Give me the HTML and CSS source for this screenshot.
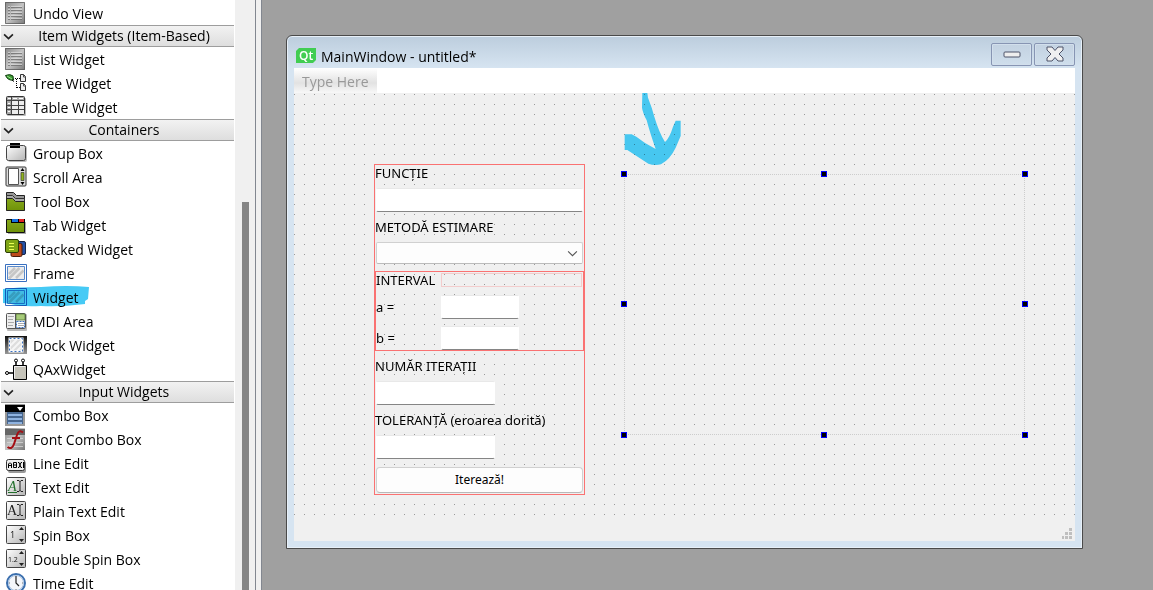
FILE: index.html
```html
<!DOCTYPE html>
<html lang="ro">
<head>
<meta charset="utf-8">
<title>Designer</title>
<link rel="stylesheet" href="styles.css">
</head>
<body>
<svg class="defs" aria-hidden="true">
  <defs>
    <linearGradient id="metal" x1="0" y1="0" x2="1" y2="1"><stop offset="0" stop-color="#fff"/><stop offset="1" stop-color="#b5b5b5"/></linearGradient>
    <linearGradient id="dark" x1="0" y1="0" x2="1" y2="1"><stop offset="0" stop-color="#8a8a8a"/><stop offset=".5" stop-color="#c4c4c4"/><stop offset="1" stop-color="#777"/></linearGradient>
    <linearGradient id="night" x1="0" y1="0" x2="0" y2="1"><stop offset="0" stop-color="#111"/><stop offset="1" stop-color="#999"/></linearGradient>
    <linearGradient id="green" x1="0" y1="0" x2="0" y2="1"><stop offset="0" stop-color="#86a81c"/><stop offset="1" stop-color="#6f9208"/></linearGradient>
    <symbol id="i-list" viewBox="0 0 22 22"><path fill="url(#dark)" d="M0 0h20v22H0z"/><path fill="none" stroke="#555" d="M.5.5h19v21H.5z" opacity=".7"/><path stroke="#ddd" d="M3 4.500h2m1 0h11M3 7.500h2m1 0h11M3 10.500h2m1 0h11M3 13.500h2m1 0h11M3 16.500h2m1 0h11" opacity=".7"/><path stroke="#666" d="M3 5.500h2m1 0h11M3 8.500h2m1 0h11M3 11.500h2m1 0h11M3 14.500h2m1 0h11M3 17.500h2m1 0h11" opacity=".7"/></symbol>
    <symbol id="i-frame" viewBox="0 0 22 22"><path fill="#fff" stroke="#3970c0" d="M.5 2.500h21v17H.5z"/><path fill="#ececec" stroke="#5a8acb" d="M2.500 4.500h17v13h-17z"/><path stroke="#c6c6c6" stroke-width="2.500" d="M4 12l6-6M4 16.500L14.500 6M11 16l7.500-7.500"/></symbol>
  </defs>
</svg>
<div class="app">
  <aside class="palette">
    <ul class="items">
      <li><svg class="ic"><use href="#i-list"/></svg>Undo View</li>
    </ul>
    <h2><svg class="chev" viewBox="0 0 10 6"><path d="M1 1l4 4 4-4"/></svg><span>Item Widgets (Item-Based)</span></h2>
    <ul class="items">
      <li><svg class="ic"><use href="#i-list"/></svg>List Widget</li>
      <li><svg class="ic" viewBox="0 0 22 22"><path fill="#3c9c35" stroke="#143f13" d="M.5 3.500Q5 1.500 8 4l.5 4Q3 9 .5 3.500z"/><path stroke="#9be08c" d="M2 4l5 3"/><path stroke="#000" d="M7 8l2 1.500"/><path fill="none" stroke="#000" stroke-dasharray="1 1" d="M10 6.500h5M11.500 7v9M12 15.500h3"/><path fill="#eee" stroke="#333" d="M15.500 2.500h3l2 2v5h-5zM15.500 11.500h3l2 2v5h-5z"/><path fill="none" stroke="#555" d="M18.500 2v3H21M18.500 11v3H21"/></svg>Tree Widget</li>
      <li><svg class="ic" viewBox="0 0 22 22"><rect x="2" y="2" width="19" height="18" rx="1" fill="#bbb"/><rect x="1.500" y=".5" width="18" height="18" rx="1" fill="#eee" stroke="#333"/><path fill="#aaa" d="M2 1h17v4H2zM2 5h4v13H2z"/><path stroke="#fff" d="M3 2.500h3m2 0h4m2 0h4M3 7.500h2M3 11.500h2M3 15.500h2"/><path stroke="#444" d="M2 4.500h17M6.500 1v17M13.500 4v14M2 9.500h17M2 13.500h17"/></svg>Table Widget</li>
    </ul>
    <h2><svg class="chev" viewBox="0 0 10 6"><path d="M1 1l4 4 4-4"/></svg><span>Containers</span></h2>
    <ul class="items">
      <li><svg class="ic" viewBox="0 0 22 22"><rect x="3" y="4" width="19" height="16" rx="2" fill="#bbb"/><rect x="1.500" y="3.500" width="19" height="15" rx="2" fill="url(#metal)" stroke="#444"/><path d="M5 1h10v5H5z"/><path fill="#555" d="M4 3h12v1H4z"/></svg>Group Box</li>
      <li><svg class="ic" viewBox="0 0 22 22"><rect x="1" y="1" width="20" height="19" rx="1" fill="#ddd" stroke="#333"/><path fill="#fff" stroke="#555" d="M3.500 2.500h10v16h-10z"/><path fill="#8fb21c" stroke="#333" stroke-width=".7" d="M16 6.500h3v8h-3z"/><path d="M15.500 5l2-3 2 3zM15.500 16l2 3 2-3z"/></svg>Scroll Area</li>
      <li><svg class="ic" viewBox="0 0 22 22"><path fill="#999" stroke="#222" d="M1.500 20V2.500h7l3 3h8V20z"/><path fill="#aaa" stroke="#333" d="M1.500 19V5.500h6l3 3h9V19z"/><path fill="url(#green)" stroke="#222" d="M1.500 20.500v-12h6l3 3h9v9z"/></svg>Tool Box</li>
      <li><svg class="ic" viewBox="0 0 22 22"><path fill="#aaa" d="M3 8h18v12H3z"/><path fill="url(#green)" stroke="#111" d="M1.500 5.500h18v13h-18z"/><path d="M6 5h14v4H6z"/><path fill="#1671e0" d="M7 5h6v3H7z"/><path fill="#e12424" d="M14 5h5v3h-5z"/></svg>Tab Widget</li>
      <li><svg class="ic" viewBox="0 0 22 22"><rect x="9.500" y="3.500" width="11" height="13" rx="1.500" fill="#2450a5" stroke="#152548"/><rect x="6" y="5.500" width="11" height="13" rx="1.500" fill="#bd4a1b" stroke="#481b0b"/><rect x=".5" y="1.500" width="13" height="13" rx="1.500" fill="#7fa516" stroke="#2c3d06"/><path stroke="#eaff55" d="M4 5.500h5M4 8.500h5M4 11.500h5"/></svg>Stacked Widget</li>
      <li><svg class="ic"><use href="#i-frame"/></svg>Frame</li>
      <li><svg class="ic"><use href="#i-frame"/></svg>Widget
        <svg class="marker" viewBox="0 0 90 24"><path d="M2 3Q16 1 40 1Q66-1 88 1L87 13L84 15V18Q60 21 40 20Q20 21 10 18L2 17Z"/></svg></li>
      <li><svg class="ic" viewBox="0 0 22 22"><rect x="2" y="4" width="20" height="17" rx="1" fill="#bbb"/><rect x="1.500" y="3.500" width="19" height="15" rx="1" fill="#eee" stroke="#555"/><path fill="#a7cb79" stroke="#4f6e32" stroke-width=".7" d="M11 4h9v6h-9z"/><path fill="#fff" stroke="#3a70c0" stroke-dasharray="2 1" d="M11.500 11.500h8v6h-8z"/><path stroke="#aaa" d="M3 6.500h6M3 9.500h5M3 12.500h6M3 15.500h5M13 13.500h6M13 15.500h6"/><path stroke="#555" d="M10.500 4v14"/></svg>MDI Area</li>
      <li><svg class="ic" viewBox="0 0 22 22"><path fill="url(#night)" d="M0 2h22v18H0z"/><path fill="#ddd" d="M4 4h14v14H4z"/><path stroke="#f5f5f5" stroke-width="2" d="M5 12l7-7M6 17L17 6M12 17l5-5"/><path fill="none" stroke="#fff" stroke-width="2" d="M4.500 4.500h13v13h-13z"/><path fill="none" stroke="#3970c0" stroke-dasharray="2 2" d="M4.500 4.500h13v13h-13z"/></svg>Dock Widget</li>
      <li><svg class="ic" viewBox="0 0 22 22"><path stroke="#000" stroke-width="1.500" d="M11 3v5M18 3v5M3 15h5"/><path fill="#c5c3b9" stroke="#000" d="M8.500 7.500h13v14h-13z"/><path fill="none" stroke="#eee" d="M9.500 20V8.500H20"/><circle cx="11" cy="2.500" r="1.500" fill="#fff" stroke="#000"/><circle cx="18" cy="2.500" r="1.500" fill="#fff" stroke="#000"/><circle cx="2" cy="15" r="1.500" fill="#fff" stroke="#000"/></svg>QAxWidget</li>
    </ul>
    <h2><svg class="chev" viewBox="0 0 10 6"><path d="M1 1l4 4 4-4"/></svg><span>Input Widgets</span></h2>
    <ul class="items">
      <li><svg class="ic" viewBox="0 0 22 22"><path fill="#999" d="M0 0h20v22H0z"/><path d="M0 1h20v7H0z"/><path fill="#fff" d="M12 3h6l-3 4z"/><path fill="#46668f" d="M2 8h16v12H2z"/><path stroke="#8fb3e0" stroke-width="2" d="M3 11h14M3 15h14M3 19h14"/></svg>Combo Box</li>
      <li><svg class="ic" viewBox="0 0 22 22"><path fill="url(#dark)" d="M0 0h20v22H0z"/><path fill="#666" d="M0 1h20v6H0z"/><path stroke="#ddd" d="M2 10.500h16M2 14.500h16M2 18.500h16" opacity=".7"/><path fill="none" stroke="#a40f14" stroke-width="2" d="M18 4.500Q14 1 12 7L9 16Q7 22 2.500 19M7 10h8"/></svg>Font Combo Box</li>
      <li><svg class="ic" viewBox="0 0 22 22"><rect x="3" y="9" width="18" height="12" rx="2" fill="#999"/><rect x="1.500" y="7.500" width="18" height="11" rx="2" fill="#eee" stroke="#333"/><path fill="none" stroke="#000" d="M3.500 16v-4l1-1h1l1 1v4M4 13.500h2M8.500 10.500v5h3v-5zM8 13h4M13 10.500h1l2 5h1M13 15.500h1l2-5h1M18.500 10v6"/></svg>Line Edit</li>
      <li><svg class="ic" viewBox="0 0 22 22"><rect x="1.500" y="1.500" width="19" height="18" rx="1" fill="url(#metal)" stroke="#444"/><text class="glyph it" x="3" y="15">A</text><path stroke="#22702c" d="M3 16.500h9"/><path fill="none" stroke="#222" d="M12 4.500h2l1 1 1-1h2M15 5v10M12 15.500h2l1-1 1 1h2"/></svg>Text Edit</li>
      <li><svg class="ic" viewBox="0 0 22 22"><rect x="1.500" y="1.500" width="19" height="18" rx="1" fill="url(#metal)" stroke="#444"/><text class="glyph" x="2" y="15">A</text><path fill="none" stroke="#222" d="M12 4.500h2l1 1 1-1h2M15 5v10M12 15.500h2l1-1 1 1h2"/></svg>Plain Text Edit</li>
      <li><svg class="ic" viewBox="0 0 22 22"><rect x="1.500" y="1.500" width="19" height="18" rx="1" fill="url(#metal)" stroke="#444"/><text class="num" x="5" y="14">1</text><path fill="#222" d="M14 6l2.500-3L19 6zM14 15l2.500 3 2.500-3z"/></svg>Spin Box</li>
      <li><svg class="ic" viewBox="0 0 22 22"><rect x="1.500" y="1.500" width="19" height="18" rx="1" fill="url(#metal)" stroke="#444"/><text class="num small" x="3" y="14">1.2</text><path fill="#222" d="M14 6l2.500-3L19 6zM14 15l2.500 3 2.500-3z"/></svg>Double Spin Box</li>
      <li><svg class="ic" viewBox="0 0 22 22"><circle cx="11" cy="11" r="9" fill="#f4f6fa" stroke="#3b6fae" stroke-width="2"/><circle cx="11" cy="11" r="7.500" fill="none" stroke="#a9c4e4"/><path fill="none" stroke="#222" stroke-width="1.200" d="M11 4v7l3 3"/><path stroke="#777" d="M4 11h1M17 11h1M11 17v1"/></svg>Time Edit</li>
    </ul>
  </aside>
  <div class="scroll"><div class="thumb"></div></div>
  <div class="splitter"></div>
  <main class="workspace">
    <section class="window">
      <header class="title">
        <svg class="qt" viewBox="0 0 20 15"><path fill="#41cd52" d="M3 0h17v12l-3 3H0V3z"/><text x="3" y="12">Qt</text></svg>
        <h1>MainWindow - untitled*</h1>
        <button type="button" class="cap" aria-label="Minimize"><svg viewBox="0 0 18 16"><rect x="1" y="6" width="16" height="5" rx="1" fill="#eee" stroke="#4d5368"/></svg></button>
        <button type="button" class="cap" aria-label="Close"><svg viewBox="0 0 18 16"><path fill="#f0f0f0" stroke="#4d5368" stroke-linejoin="round" d="M1 1h5l3 3.500L12 1h5v3l-4 4 4 4v3h-5l-3-3.500L6 15H1v-3l4-4-4-4z"/></svg></button>
      </header>
      <nav class="menu"><a href="#">Type Here</a></nav>
      <div class="canvas">
        <form class="layout">
          <label for="f">FUNCȚIE</label>
          <input id="f" type="text">
          <label for="m">METODĂ ESTIMARE</label>
          <div class="pick"><select id="m"><option></option></select><svg viewBox="0 0 10 6"><path d="M1 1l4 4 4-4"/></svg></div>
          <div class="grid">
            <span>INTERVAL</span><div class="spacer"></div>
            <label for="a">a =</label><input id="a" type="text">
            <label for="b">b =</label><input id="b" type="text">
          </div>
          <label for="n">NUMĂR ITERAȚII</label>
          <input id="n" class="short" type="text">
          <label for="t">TOLERANȚĂ (eroarea dorită)</label>
          <input id="t" class="short" type="text">
          <button type="button">Iterează!</button>
        </form>
        <div class="selection">
          <i></i><i></i><i></i><i></i><i></i><i></i><i></i><i></i>
        </div>
        <svg class="arrow" viewBox="102 38 174 219"><path d="M157 38H172L174 52Q186 82 193 109Q207 156 225 185Q239 172 249 139L257 121H272V167L257 202Q241 236 213 252Q193 257 175 250L112 209H104V162H125L139 169Q165 190 197 206Q180 158 170 120Q158 97 156 82Z"/></svg>
      </div>
      <footer class="status"><svg class="grip" viewBox="0 0 10 11"><path d="M7 0h3v3H7zM3 4h3v3H3zM7 4h3v3H7zM0 8h2v3H0zM3 8h3v3H3zM7 8h3v3H7z"/></svg></footer>
    </section>
  </main>
</div>
</body>
</html>
```
FILE: styles.css
```css
* { box-sizing: border-box; }
body { margin: 0; font: 14px/24px "Open Sans", "Noto Sans", sans-serif; color: #000; background: #a0a0a0; }
h1, h2, ul { margin: 0; padding: 0; font-weight: 400; }
.defs { position: absolute; width: 0; height: 0; }
.app { display: flex; height: 100vh; overflow: hidden; }

.palette { flex: none; width: 235px; padding: 1px 1px 0; background: #fff; overflow: hidden; }
.palette h2 { display: flex; align-items: center; height: 22px; padding-left: 2px; font-size: 14px; line-height: 20px; border: solid #9d9d9d; border-width: 1px 0; background: linear-gradient(#f2f2f2, #dedede); }
.palette h2 span { flex: 1; text-align: center; }
.chev { width: 11px; height: 7px; fill: none; stroke: #222; stroke-width: 1.5; }
.items { list-style: none; }
.items li { position: relative; display: flex; align-items: flex-start; gap: 6px; height: 24px; padding-left: 4px; line-height: 26px; white-space: nowrap; }
.ic { width: 22px; height: 22px; margin-top: 1px; flex: none; }
.glyph { font: 14px "Liberation Serif", serif; fill: #222; }
.it { font-style: italic; fill: #22702c; }
.num { font: 9px "Open Sans", sans-serif; fill: #111; }
.small { font-size: 7px; }
.marker { position: absolute; left: 0; top: 1px; width: 90px; height: 24px; fill: #46caf5; mix-blend-mode: multiply; }

.scroll { flex: none; width: 20px; padding: 202px 6px 0 7px; background: #f0f0f0; }
.thumb { height: 100%; background: #858585; }
.splitter { flex: none; width: 7px; border: solid #828790; border-width: 0 1px; background: #f0f0f0; }
.workspace { flex: 1; display: flex; min-width: 0; padding: 35px 70px 41px 24px; background: #a0a0a0; }

.window { flex: 1; display: flex; flex-direction: column; min-width: 0; padding: 0 7px 7px; border: 1px solid #4a4a4a; border-radius: 6px 6px 0 0; background: linear-gradient(#bccddd, #d6e4f1 32px); box-shadow: inset 0 0 0 1px #e8f0f8; }
.title { display: flex; align-items: center; gap: 2px; height: 32px; padding: 4px 0 0 2px; }
.title h1 { flex: 1; font-size: 14px; line-height: 20px; padding: 6px 0 0 3px; }
.qt { width: 20px; height: 15px; margin-top: 2px; }
.qt text { font: 600 12px "Open Sans", sans-serif; fill: #fff; }
.cap { display: flex; align-items: center; justify-content: center; width: 41px; height: 23px; padding: 0; border: 1px solid #8795b3; border-radius: 2px; background: linear-gradient(#c3d2e1, #cfdeec); box-shadow: inset 0 0 0 1px #d2dfec; }
.cap svg { width: 18px; height: 16px; }
.menu { display: flex; height: 25px; background: #fff; }
.menu a { padding: 1px 8px 0; line-height: 25px; color: #999; text-decoration: none; background: linear-gradient(#fff, #e2e2e2 60%, #f8f8f8); }

.canvas { position: relative; flex: 1; background: linear-gradient(to right, transparent 1px, #f0f0f0 1px) 0 1px / 10px 10px, linear-gradient(to bottom, #999 1px, #f0f0f0 1px) 0 1px / 10px 10px; }
.layout { position: absolute; left: 80px; top: 71px; width: 211px; display: flex; flex-direction: column; gap: 6px; padding: 0 2px 2px; outline: 1px solid #fa7272; outline-offset: -1px; font: 13px/18px "Noto Sans", sans-serif; }
.layout > label { margin-left: -1px; }
input { display: block; width: 100%; height: 24px; padding: 0 4px; font: inherit; border: solid #fff; border-width: 1px; border-top-color: #e8e8e8; border-bottom-color: #858585; border-radius: 2px; background: #fff; }
.short { width: 119px; }
.pick { position: relative; }
select { display: block; appearance: none; width: 100%; height: 22px; border: 1px solid #d0d0d0; border-bottom-color: #bbb; border-radius: 2px; background: #fdfdfd; }
.pick svg { position: absolute; right: 5px; top: 8px; width: 11px; height: 7px; fill: none; stroke: #555; pointer-events: none; }
.grid { display: grid; grid-template-columns: 65px 1fr; grid-template-rows: 16px 24px 24px; row-gap: 7px; align-items: center; height: 80px; margin: 1px -1px 0; padding-right: 1px; border: 1px solid #fa7272; }
.grid input { width: 78px; }
.spacer { height: 14px; border: 1px solid #f3cccc; }
.layout button { height: 26px; margin-top: 2px; font-family: inherit; font-size: 12px; line-height: 18px; border: 1px solid #d0d0d0; border-bottom-color: #b8b8b8; border-radius: 4px; background: #fdfdfd; }

.selection { position: absolute; left: 327px; top: 78px; width: 407px; height: 267px; }
.selection::before { content: ""; position: absolute; inset: 3px; border: 1px dotted #ccc; }
.selection i { position: absolute; width: 6px; height: 6px; background: #000; border: 1px solid #00f; }
.selection i:nth-child(-n+3) { top: 0; }
.selection i:nth-child(n+4):nth-child(-n+5) { top: calc(50% - 4px); }
.selection i:nth-child(n+6) { bottom: 0; }
.selection i:nth-child(2), .selection i:nth-child(7) { left: calc(50% - 4px); }
.selection i:nth-child(3), .selection i:nth-child(5), .selection i:nth-child(8) { right: 0; }
.arrow { position: absolute; left: 330px; top: 0; width: 58px; height: 73px; fill: #4bd4ff; mix-blend-mode: multiply; }
.status { display: flex; justify-content: flex-end; align-items: flex-end; height: 21px; padding: 0 3px 2px; background: #f0f0f0; }
.grip { width: 10px; height: 11px; fill: #bfbfbf; }
```
